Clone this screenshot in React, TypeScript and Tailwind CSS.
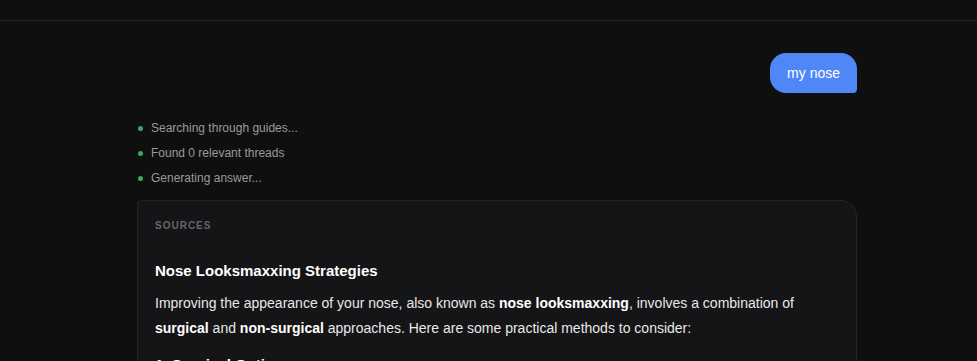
export default function App() {
  const steps = ["Searching through guides...", "Found 0 relevant threads", "Generating answer..."];
  return (
    <div className="min-h-screen h-[361px] overflow-hidden bg-[#0f0f0f] font-['Liberation_Sans',Arial,sans-serif] text-white">
      <div className="h-[21px] border-b border-[#26262a]" />
      <div className="pl-[137px] pt-8">
        <div className="w-[720px] flex flex-col">
          <div className="flex justify-end">
            <div className="bg-[#4f87f6] text-white text-sm leading-5 px-[17px] py-2.5 rounded-2xl rounded-br-[4px]">
              my nose
            </div>
          </div>

          <div className="mt-[27px] flex flex-col gap-[9px]">
            {steps.map((s) => (
              <div key={s} className="flex items-center gap-2 h-4">
                <span className="ml-px w-[5px] h-[5px] rounded-full bg-[#3ea762]" />
                <span className="text-xs text-[#9a9a9a]">{s}</span>
              </div>
            ))}
          </div>

          <div className="mt-[14px] bg-[#151517] border border-[#242427] rounded-2xl rounded-tl-[4px] px-[17px] pt-[18px] pb-6">
            <div className="text-[10px] leading-[14px] font-bold tracking-[0.1em] text-[#666669]">SOURCES</div>
            <h2 className="mt-7 text-[15px] leading-5 font-bold">Nose Looksmaxxing Strategies</h2>
            <p className="mt-2.5 text-sm leading-[25px] text-[#e8e8e8]">
              Improving the appearance of your nose, also known as <strong className="text-white">nose looksmaxxing</strong>, involves a combination of{" "}
              <strong className="text-white">surgical</strong> and <strong className="text-white">non-surgical</strong> approaches. Here are some practical methods to consider:
            </p>
            <h3 className="mt-3.5 text-[15px] leading-5 font-bold">1. Surgical Options</h3>
          </div>
        </div>
      </div>
    </div>
  );
}
